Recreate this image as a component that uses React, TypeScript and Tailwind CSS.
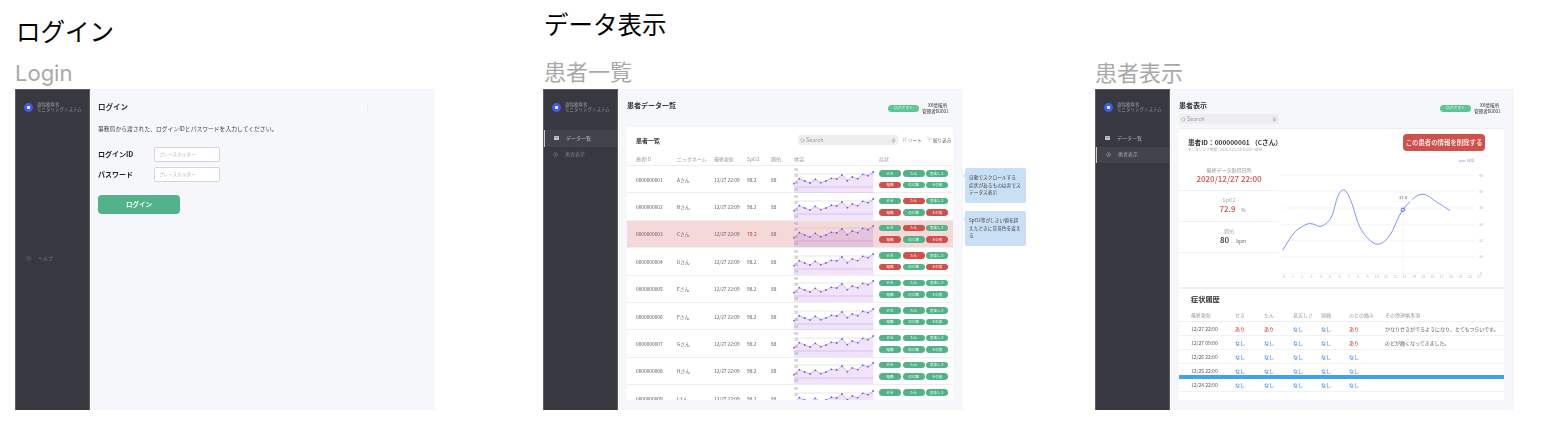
import { Search, Mic, ArrowDownUp, ListFilter, CircleUser, CircleHelp } from "lucide-react";

const spark: [number, number][] = [
  [0, 17.7], [5.3, 12.7], [10.7, 15], [16, 17], [21.3, 13.3], [26.7, 16.7], [32, 15], [37.3, 12.3],
  [42.7, 13], [48, 9], [53.3, 14.7], [58.3, 11], [63.7, 12.7], [68.7, 8.3], [74, 9.7], [79.2, 6],
];

function Spark() {
  const line = spark.map((p) => p.join(",")).join(" ");
  return (
    <svg width="86" height="27" viewBox="-6 0 86 27" className="block shrink-0">
      <polygon points={`0,27 ${line} 79.2,27`} fill="#a24fe0" fillOpacity="0.16" />
      <line x1="0" x2="79.2" y1="8" y2="8" stroke="#8a8a8a" strokeOpacity="0.3" strokeWidth="0.7" />
      <line x1="0" x2="79.2" y1="21" y2="21" stroke="#8a3fb8" strokeOpacity="0.3" strokeWidth="0.7" />
      <polyline points={line} fill="none" stroke="#8f7cf0" strokeWidth="0.5" />
      {spark.map((p) => (
        <circle key={p[0]} cx={p[0]} cy={p[1]} r="0.9" fill="#6f57ee" />
      ))}
      {[["40", 5], ["38", 11], ["36", 18], ["34", 24.5]].map(([t, y]) => (
        <text key={t} x="0" y={y} fontSize="3.6" fill="#999">{t}</text>
      ))}
    </svg>
  );
}

function Tag({ label, red }: { label: string; red?: boolean }) {
  return (
    <span className={`flex h-[6.5px] w-[22px] items-center justify-center rounded-full text-[3.5px] leading-none text-white ${red ? "bg-[#d0504c]" : "bg-[#52b388]"}`}>
      {label}
    </span>
  );
}

const labels = ["せき", "たん", "息苦しさ", "頭痛", "のど痛", "その他"];
const rows = [
  { id: "0000000001", n: "Aさん", red: [3] },
  { id: "0000000002", n: "Bさん", red: [1, 3, 5] },
  { id: "0000000003", n: "Cさん", red: [1, 3, 5], alert: true },
  { id: "0000000004", n: "Dさん", red: [1, 3, 5] },
  { id: "0000000005", n: "Eさん", red: [] },
  { id: "0000000006", n: "Fさん", red: [] },
  { id: "0000000007", n: "Gさん", red: [] },
  { id: "0000000008", n: "Hさん", red: [] },
  { id: "0000000009", n: "Iさん", red: [] },
];

function ListIcon() {
  return (
    <svg width="5" height="4" viewBox="0 0 5 4" className="shrink-0">
      <rect width="5" height="4" rx="0.4" fill="#c4c4cc" />
      <rect x="0.7" y="1.4" width="3.6" height="0.5" fill="#6b6b75" />
    </svg>
  );
}

function Sidebar({ active, help }: { active?: number; help?: boolean }) {
  return (
    <aside className="flex h-full w-[75px] shrink-0 flex-col border-x border-t border-[#5d5d66] bg-[#383840]">
      <div className="mt-[11px] flex h-[12px] items-center pl-[8px]">
        <span className="flex h-[9px] w-[9px] items-center justify-center rounded-full bg-[#3a5bf5]">
          <span className="h-[3px] w-[3px] rounded-[1px] bg-white" />
        </span>
        <div className="ml-[4px] whitespace-nowrap text-[4.4px] leading-[5.4px] tracking-[0.1px] text-[#96969e]">
          <div>遠隔療養者</div>
          <div>モニタリングシステム</div>
        </div>
      </div>
      {help ? (
        <div className="mt-[140px] flex h-[10px] items-center pl-[10px] text-[5px] text-[#77777f]">
          <CircleHelp size={5} strokeWidth={2} className="shrink-0" />
          <span className="ml-[7px]">ヘルプ</span>
        </div>
      ) : (
        <nav className="mt-[17px]">
          <div className={`flex h-[16.5px] items-center pl-[9px] text-[5px] ${active === 0 ? "border-l border-[#c9c9d0] bg-[#43434b] text-[#b4b4bc]" : "text-[#a8a8b0]"}`}>
            <ListIcon />
            <span className="ml-[7px] -translate-y-[1px]">データ一覧</span>
          </div>
          <div className={`flex h-[16.5px] items-center pl-[9px] text-[5px] ${active === 1 ? "border-l border-[#c9c9d0] bg-[#43434b] text-[#a0a0a8]" : "text-[#7d7d85]"}`}>
            <CircleUser size={5} strokeWidth={2} className="shrink-0" />
            <span className="ml-[7px] -translate-y-[1px]">患者表示</span>
          </div>
        </nav>
      )}
    </aside>
  );
}

function UserBlock() {
  return (
    <div className="flex shrink-0 items-center whitespace-nowrap pt-[13px] text-[4.6px] leading-[6px] text-[#333]">
      <span className="flex h-[7px] w-[31px] items-center justify-center rounded-full bg-[#5cc794] text-[3.8px] text-white">ログアウト</span>
      <div className="ml-[3px] w-[25px] text-right">
        <div>XX情報所</div>
        <div>管理者00001</div>
      </div>
    </div>
  );
}

function SearchBox() {
  return (
    <div className="flex h-[10px] w-[100px] shrink-0 items-center rounded-[2px] bg-[#eeeeee] px-[2px] text-[5.5px] text-[#999]">
      <Search size={5} strokeWidth={2} className="shrink-0" />
      <span className="ml-[1px] flex-1">Search</span>
      <Mic size={5} strokeWidth={2} className="shrink-0" />
    </div>
  );
}

function LoginFrame() {
  return (
    <div className="flex h-[321px] w-[420px] bg-[#f6f7fb] blur-[0.35px]">
      <Sidebar help />
      <main className="flex-1 pl-[8px]">
        <div className="flex items-center pt-[13px]">
          <h2 className="h-[10px] w-[269px] text-[7.5px] font-semibold leading-[10px] text-[#333]">ログイン</h2>
          <span className="h-[9px] w-px bg-[#eceef3]" />
        </div>
        <p className="mt-[12px] h-[10px] text-[5.8px] leading-[10px] text-[#444]">事務局から渡された、ログインIDとパスワードを入力してください。</p>
        <div className="mt-[13px] flex h-[15px] items-center">
          <label className="w-[56px] text-[7px] font-bold text-[#222]">ログインID</label>
          <div className="flex h-[15px] w-[66px] items-center rounded-[2px] border border-[#d4d4dc] bg-white pl-[4px] text-[4.6px] text-[#bbb]">プレースホルダー</div>
        </div>
        <div className="mt-[5px] flex h-[15px] items-center">
          <label className="w-[56px] text-[7px] font-bold text-[#222]">パスワード</label>
          <div className="flex h-[15px] w-[66px] items-center rounded-[2px] border border-[#d4d4dc] bg-white pl-[4px] text-[4.6px] text-[#bbb]">プレースホルダー</div>
        </div>
        <button className="mt-[13px] flex h-[19px] w-[82px] items-center justify-center rounded-[4px] bg-[#52b388] text-[6.5px] font-bold text-white">ログイン</button>
      </main>
    </div>
  );
}

function ListFrame() {
  return (
    <div className="relative h-[321px] w-[420px]">
      <div className="flex h-full bg-[#f6f7fb] blur-[0.35px]">
        <Sidebar active={0} />
        <main className="flex min-w-0 flex-1 flex-col pl-[9px] pr-[10px]">
          <header className="flex h-[38px] shrink-0 items-start justify-between pr-[6px]">
            <h2 className="mt-[11px] text-[7px] font-bold leading-[10px] text-[#333]">患者データ一覧</h2>
            <UserBlock />
          </header>
          <section className="h-[273px] overflow-hidden rounded-t-[2px] bg-white">
            <div className="flex h-[26px] items-center whitespace-nowrap pl-[9px] text-[4.6px] text-[#555]">
              <h3 className="w-[162px] shrink-0 text-[6px] font-bold text-[#333]">患者一覧</h3>
              <SearchBox />
              <span className="ml-[4px] flex w-[25px] shrink-0 items-center gap-[1px]"><ArrowDownUp size={5} className="text-[#aaa]" />ソート</span>
              <span className="flex shrink-0 items-center gap-[1px]"><ListFilter size={5} className="text-[#aaa]" />絞り込み</span>
            </div>
            <div className="flex h-[13px] items-center border-b border-[#eeeeee] pl-[9px] text-[5px] text-[#9a9a9a]">
              <span className="w-[41px]">患者ID</span>
              <span className="w-[37px]">ニックネーム</span>
              <span className="w-[33px]">最終更新</span>
              <span className="w-[24px]">SpO2</span>
              <span className="w-[23px]">脈拍</span>
              <span className="w-[85px]">体温</span>
              <span>症状</span>
            </div>
            {rows.map((r) => (
              <div key={r.id} className={`flex h-[27.4px] shrink-0 items-center border-b border-[#eeeeee] pl-[9px] text-[4.8px] text-[#555] ${r.alert ? "bg-[#f5d9d9]" : ""}`}>
                <span className="w-[41px]">{r.id}</span>
                <span className="w-[37px]">{r.n}</span>
                <span className="w-[33px]">12/27 22:09</span>
                <span className={`w-[24px] ${r.alert ? "font-medium text-[#d0504c]" : ""}`}>{r.alert ? "79.2" : "98.2"}</span>
                <span className="w-[17px]">88</span>
                <Spark />
                <div className="ml-[5px] grid grid-cols-3 gap-x-[1.5px] gap-y-[5px]">
                  {labels.map((l, i) => (
                    <Tag key={l} label={l} red={r.red.includes(i)} />
                  ))}
                </div>
              </div>
            ))}
          </section>
        </main>
      </div>
      <Callout top="top-[79px]" lines={["自動でスクロールする", "症状があるものは赤でス", "テータス表示"]} />
      <Callout top="top-[122px]" lines={["SpO2等がしきい値を超", "えたときに背景色を変え", "る"]} />
    </div>
  );
}

function Callout({ top, lines }: { top: string; lines: string[] }) {
  return (
    <div className={`absolute left-full ml-[2px] flex h-[35px] w-[61px] flex-col justify-center rounded-[2px] bg-[#c8dff5] pl-[4px] text-[4.7px] leading-[7.5px] text-[#444] blur-[0.35px] ${top}`}>
      <span className="absolute -left-[2px] top-[6px] h-0 w-0 border-y-[2.5px] border-r-[2.5px] border-y-transparent border-r-[#c8dff5]" />
      {lines.map((l) => (
        <div key={l} className="whitespace-nowrap">{l}</div>
      ))}
    </div>
  );
}

const curve: [number, number][] = [
  [0.7, 94.3], [12, 77], [24, 68.5], [31, 68], [39, 70.3], [49, 61.7], [56, 40], [62.3, 34],
  [69, 45], [79, 73.3], [94, 88], [107.3, 80], [121, 53.7], [139, 38.3], [155.7, 46.7], [168, 54.7],
];

function smooth(p: [number, number][]) {
  let d = `M${p[0][0]} ${p[0][1]}`;
  for (let i = 0; i < p.length - 1; i++) {
    const a = p[Math.max(i - 1, 0)], b = p[i], c = p[i + 1], e = p[Math.min(i + 2, p.length - 1)];
    d += ` C${b[0] + (c[0] - a[0]) / 6} ${b[1] + (c[1] - a[1]) / 6} ${c[0] - (e[0] - b[0]) / 6} ${c[1] - (e[1] - b[1]) / 6} ${c[0]} ${c[1]}`;
  }
  return d;
}

function BigChart() {
  const grid = [19.3, 35.3, 52, 68.7, 84.7, 100.7, 117.3];
  const yLabels = ["40", "38", "36", "34", "32", "30", "0"];
  return (
    <svg width="212" height="130" viewBox="0 0 212 130" className="ml-[3px] block shrink-0">
      {grid.map((y) => (
        <line key={y} x1="0" x2="192" y1={y} y2={y} stroke="#f0f0f3" strokeWidth="0.7" />
      ))}
      {grid.map((y, i) => (
        <text key={y} x="199" y={y + 1.3} fontSize="3.6" fill="#bbb" textAnchor="middle">{yLabels[i]}</text>
      ))}
      {Array.from({ length: 22 }, (_, i) => (
        <text key={i} x={1.7 + i * 9.3} y="122.3" fontSize="3.6" fill="#bbb" textAnchor="middle">{i}</text>
      ))}
      <line x1="177" x2="183" y1="5" y2="5" stroke="#6f86f5" strokeWidth="0.7" />
      <text x="185" y="6.3" fontSize="3.6" fill="#999">体温</text>
      <line x1="121" x2="121" y1="53.7" y2="117" stroke="#eeeeee" strokeWidth="0.6" />
      <path d={smooth(curve)} fill="none" stroke="#6079f2" strokeWidth="0.8" />
      <circle cx="121" cy="53.7" r="3.2" fill="#5b74f2" fillOpacity="0.15" />
      <circle cx="121" cy="53.7" r="1.5" fill="#fff" stroke="#3a5bf5" strokeWidth="0.9" />
      <rect x="112" y="36.5" width="18" height="9" rx="1" fill="#fff" stroke="#f0f0f3" strokeWidth="0.5" />
      <text x="121" y="42.5" fontSize="4" fill="#444" textAnchor="middle">37.8</text>
    </svg>
  );
}

const hist = [
  { d: "12/27 22:00", v: [1, 1, 0, 0, 1], c: "かなりせきがでるようになり、とてもつらいです。" },
  { d: "12/27 09:00", v: [0, 0, 0, 0, 1], c: "のどが痛くなってきました。" },
  { d: "12/26 22:00", v: [0, 0, 0, 0, 0], c: "" },
  { d: "12/25 22:00", v: [0, 0, 0, 0, 0], c: "" },
  { d: "12/24 22:00", v: [0, 0, 0, 0, 0], c: "" },
];
const histGrid = "grid grid-cols-[44px_29px_29px_28px_28px_36px_1fr] items-center pl-[12px]";

function PatientFrame() {
  return (
    <div className="flex h-[321px] w-[419px] bg-[#f6f7fb] blur-[0.35px]">
      <Sidebar active={1} />
      <main className="flex min-w-0 flex-1 flex-col pl-[9px] pr-[10px]">
        <header className="flex h-[39px] shrink-0 items-start justify-between pr-[5px]">
          <div>
            <h2 className="mt-[11px] text-[7px] font-bold leading-[10px] text-[#333]">患者表示</h2>
            <div className="mt-[4px]"><SearchBox /></div>
          </div>
          <UserBlock />
        </header>
        <section className="relative h-[272px] rounded-t-[2px] border-t border-[#eeeeee] bg-white">
          <div className="flex h-[27px] justify-between pl-[9px] pr-[19px]">
            <div>
              <div className="pt-[9px] text-[6.6px] font-semibold leading-[9px] text-[#333]">患者ID：000000001 （Cさん）</div>
              <div className="text-[3.6px] leading-[5px] text-[#aaa]">モニタリング期間：2020.01.2/20 10:00〜現在</div>
            </div>
            <button className="mt-[5px] flex h-[17px] w-[82px] items-center justify-center rounded-[4px] bg-[#d0504c] text-[6.4px] font-medium text-white">この患者の情報を削除する</button>
          </div>
          <div className="flex h-[133px] border-b-2 border-[#f0f0f3]">
            <div className="w-[100px] shrink-0 text-center">
              <div className="flex h-[35px] flex-col items-center justify-center border-b border-[#f0f0f3] pt-[4px]">
                <div className="text-[5px] leading-[7px] text-[#999]">最終データ取得日時</div>
                <div className="text-[8px] font-medium leading-[11px] text-[#d0504c]">2020/12/27 22:00</div>
              </div>
              <div className="flex h-[31px] flex-col items-center justify-center border-b border-[#f0f0f3]">
                <div className="text-[5px] leading-[7px] text-[#aaa]">SpO2</div>
                <div className="flex items-baseline pl-[7px] text-[8px] font-medium leading-[11px] text-[#d0504c]">72.9<span className="ml-[6px] text-[4.5px] font-normal text-[#777]">%</span></div>
              </div>
              <div className="flex h-[31px] flex-col items-center justify-center border-b border-[#f0f0f3]">
                <div className="text-[5px] leading-[7px] text-[#aaa]">脈拍</div>
                <div className="flex items-baseline pl-[8px] text-[8px] font-medium leading-[11px] text-[#333]">80<span className="ml-[7px] text-[4.5px] font-normal text-[#666]">bpm</span></div>
              </div>
            </div>
            <BigChart />
          </div>
          <h3 className="flex h-[20px] items-center pl-[12px] text-[7.2px] font-bold text-[#333]">症状履歴</h3>
          <div className={`${histGrid} h-[13px] border-b border-[#eeeeee] text-[5px] text-[#999]`}>
            <span>最終更新</span><span>せき</span><span>たん</span><span>息苦しさ</span><span>頭痛</span><span>のどの痛み</span><span>その他連絡事項</span>
          </div>
          {hist.map((h) => (
            <div key={h.d} className={`${histGrid} h-[14px] border-b border-[#f2f2f2] text-[5px] text-[#555] last:border-b-0`}>
              <span>{h.d}</span>
              {h.v.map((x, i) => (
                <span key={i} className={`font-medium ${x ? "text-[#d0504c]" : "text-[#4a90e2]"}`}>{x ? "あり" : "なし"}</span>
              ))}
              <span className="whitespace-nowrap">{h.c}</span>
            </div>
          ))}
          <div className="absolute inset-x-0 top-[246px] h-[4px] bg-[#44a1ee]" />
        </section>
      </main>
    </div>
  );
}

export default function App() {
  return (
    <div className="flex h-[438px] w-[1546px] overflow-hidden bg-white font-['Noto_Sans_CJK_JP','Noto_Sans',sans-serif]">
      <div className="ml-[15px] w-[420px] shrink-0">
        <h1 className="ml-[1px] mt-[15px] h-[32px] text-[24.5px] font-normal leading-[32px] text-black">ログイン</h1>
        <div className="mt-[10px] h-[32px] font-['Inter',sans-serif] text-[22px] leading-[32px] text-[#a8a8a8]">Login</div>
        <LoginFrame />
      </div>
      <div className="ml-[108px] w-[420px] shrink-0">
        <h1 className="ml-[1px] mt-[8px] h-[32px] text-[24.5px] font-normal leading-[32px] text-black">データ表示</h1>
        <div className="ml-[1px] mt-[15px] h-[34px] text-[22px] leading-[30px] text-[#a8a8a8]">患者一覧</div>
        <ListFrame />
      </div>
      <div className="ml-[132px] w-[419px] shrink-0">
        <div className="mt-[57px] h-[32px] text-[22px] leading-[29px] text-[#a8a8a8]">患者表示</div>
        <PatientFrame />
      </div>
    </div>
  );
}
